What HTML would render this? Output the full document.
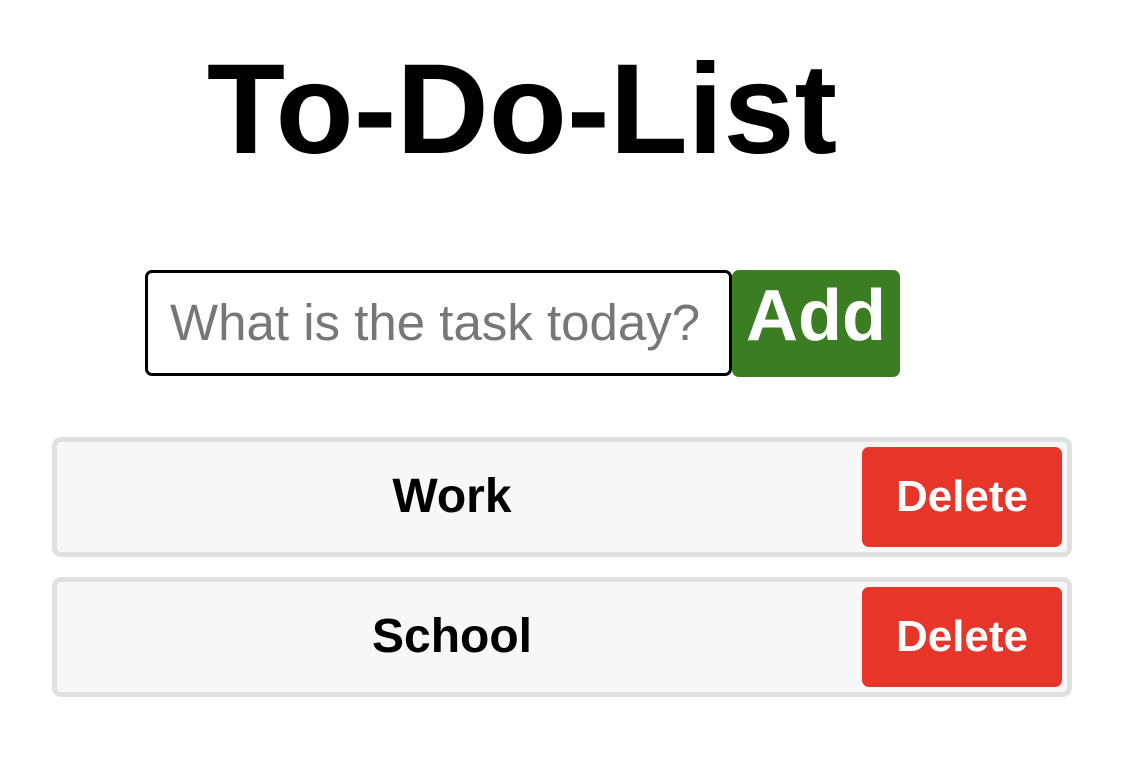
<!DOCTYPE html>
<html><head><meta charset="utf-8"><style>
body{margin:0;width:1132px;height:764px;background:#fff;font-family:"Liberation Sans",Arial,sans-serif;position:relative;overflow:hidden}
.abs{position:absolute;box-sizing:border-box}
h1{position:absolute;margin:0;left:0;width:1044px;text-align:center;top:40px;font-size:128px;font-weight:bold;line-height:140px;color:#000}
.inp{left:145px;top:270px;width:587px;height:106px;border:3px solid #000;border-radius:7px;font-size:51px;color:#777;padding-left:22px;line-height:100px;white-space:nowrap}
.add{left:732px;top:270px;width:168px;height:107px;background:#3a7d22;border-radius:7px;color:#fff;font-weight:bold;font-size:72px;text-align:center;line-height:92px}
.item{left:52px;width:1020px;height:120px;border:5px solid #e0e0e0;border-radius:9px;background:#f7f7f7}
.item .t{position:absolute;left:0;width:790px;text-align:center;top:0;line-height:110px;font-size:48px;font-weight:bold;color:#000}
.item .d{position:absolute;left:805px;top:5px;width:200px;height:100px;background:#e8352a;border-radius:7px;color:#fff;font-weight:bold;font-size:44px;text-align:center;line-height:100px}
</style></head><body>
<h1>To-Do-List</h1>
<div class="abs inp">What is the task today?</div>
<div class="abs add">Add</div>
<div class="abs item" style="top:437px"><div class="t">Work</div><div class="d">Delete</div></div>
<div class="abs item" style="top:577px"><div class="t">School</div><div class="d">Delete</div></div>
</body></html>
